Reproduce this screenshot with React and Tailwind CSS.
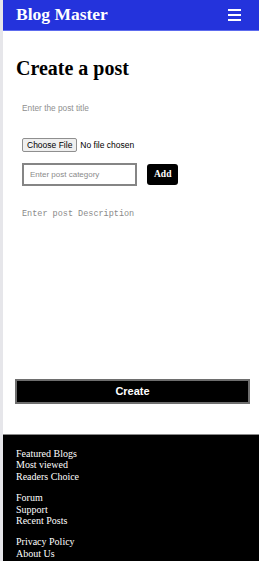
export default function App() {
  const links = [
    ["Featured Blogs", "Most viewed", "Readers Choice"],
    ["Forum", "Support", "Recent Posts"],
    ["Privacy Policy", "About Us"],
  ];

  return (
    <div className="flex min-h-screen bg-white">
      <div className="w-[3px] shrink-0 bg-[#e6e6ea]" />
      <div className="flex-1 flex flex-col">
        <header className="h-[31px] flex items-center justify-between pl-[13px] pr-[18px] bg-[#2433dc] border-b border-[#5d6bee]">
          <h2 className="text-white font-bold text-[17.5px] leading-none font-['Liberation_Serif',serif]">
            Blog Master
          </h2>
          <div className="flex flex-col gap-[3px] w-[13px]">
            <span className="h-[2px] bg-white" />
            <span className="h-[2px] bg-white" />
            <span className="h-[2px] bg-white" />
          </div>
        </header>

        <main className="flex flex-col font-['Liberation_Sans',Arial,sans-serif]">
          <h1 className="mt-[26px] pl-[13px] text-[20px] leading-[23px] font-bold text-black font-['Liberation_Serif',serif]">
            Create a post
          </h1>

          <input
            type="text"
            placeholder="Enter the post title"
            className="mt-[20px] ml-[19px] w-[200px] h-[16px] text-[8.3px] outline-none placeholder:text-[#8f8f8f]"
          />

          <input
            type="file"
            className="mt-[22px] ml-[19px] text-[8.5px] text-black file:mr-[3px] file:px-[4px] file:h-[14px] file:border file:border-[#8f8f8f] file:rounded-[2px] file:bg-[#efefef] file:text-black"
          />

          <div className="mt-[11px] ml-[19px] flex items-center gap-[10px]">
            <input
              type="text"
              placeholder="Enter post category"
              className="w-[115px] h-[23px] border-2 border-[#858585] px-[6px] text-[8px] outline-none placeholder:text-[#8a8a8a]"
            />
            <button className="h-[21px] px-[7px] bg-black text-white rounded-[3px] text-[9.5px] font-bold font-['Liberation_Serif',serif]">
              Add
            </button>
          </div>

          <textarea
            placeholder="Enter post Description"
            className="mt-[22px] ml-[19px] mr-[9px] h-[154px] resize-none outline-none text-[8.5px] font-['Liberation_Mono',monospace] placeholder:text-[#8a8a8a]"
          />

          <button className="mt-[17px] ml-[12px] mr-[9px] h-[25px] bg-black text-white border-2 border-[#6e6e6e] text-[11px] font-bold">
            Create
          </button>
        </main>

        <footer className="mt-[30px] flex-1 bg-black border-t border-[#8a8a8a] pt-[13px] pb-[10px] pl-[13px] flex flex-col gap-[10px] font-['Liberation_Serif',serif]">
          {links.map((group, i) => (
            <ul key={i} className="flex flex-col">
              {group.map((l) => (
                <li key={l} className="text-white text-[10px] leading-[11.4px]">
                  {l}
                </li>
              ))}
            </ul>
          ))}
        </footer>
      </div>
    </div>
  );
}
